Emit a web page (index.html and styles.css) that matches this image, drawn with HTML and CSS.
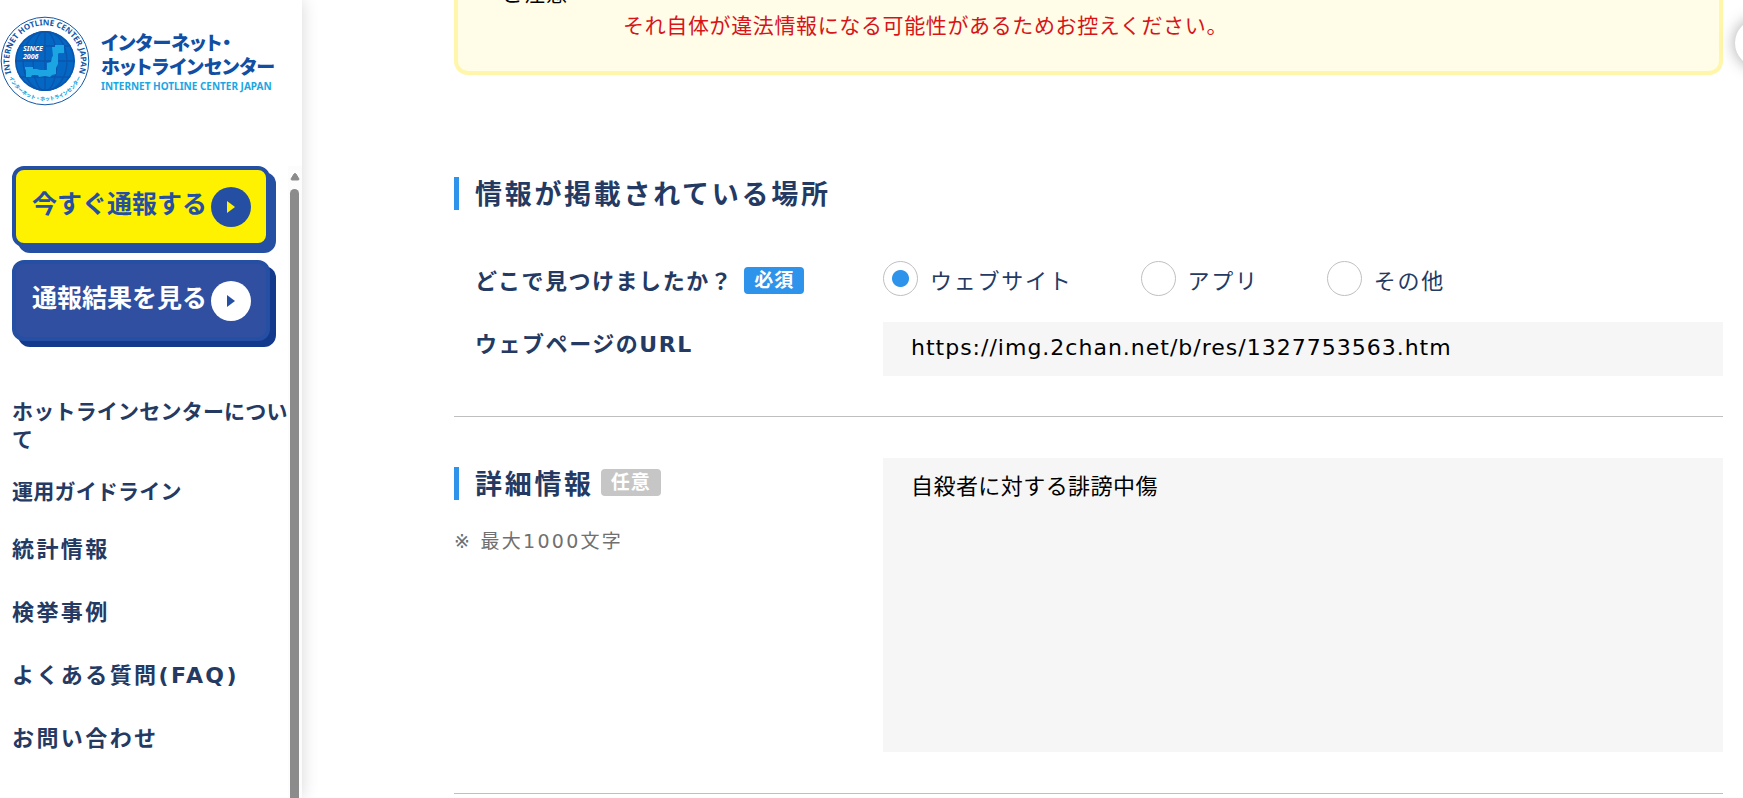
FILE: index.html
```html
<!DOCTYPE html>
<html lang="ja">
<head>
<meta charset="utf-8">
<meta name="viewport" content="width=device-width, initial-scale=1">
<title>インターネット・ホットラインセンター</title>
<link rel="stylesheet" href="styles.css">
</head>
<body>
<div class="page">
  <aside class="sidebar">
    <a class="logo" href="#">
      <svg class="emblem" viewBox="0 0 90 90" aria-hidden="true">
        <defs>
          <path id="arc-top" d="M11.7 58.2A35.8 35.8 0 1 1 78.3 58.2"/>
          <path id="arc-bottom" d="M7.800 58.500A39.500 39.500 0 0 0 82.200 58.500"/>
          <clipPath id="globe"><circle cx="45" cy="45" r="30"/></clipPath>
        </defs>
        <circle cx="45" cy="45" r="43.8" fill="#fff" stroke="#1257a8" stroke-width="1"/>
        <circle cx="45" cy="45" r="30" fill="#0567c4"/>
        <g clip-path="url(#globe)" fill="none" stroke="#0b56ad" stroke-width="1.4">
          <circle cx="45" cy="45" r="29"/>
          <path d="M45 15v60M15 45h60M19 30h52M19 61h52"/>
          <ellipse cx="45" cy="45" rx="12" ry="30"/>
          <ellipse cx="45" cy="45" rx="22" ry="30"/>
        </g>
        <path d="M52 31h3v-2h9v8h-5l-1 1v10l-2 4v6l-4 1-2 2-5-1-6 1-1-2h-6l-1 2h-5v-7l-1-1v-2h8v2h4l3 1h7v-7l4-1 1-5 1-1z" fill="#1ba6e3"/>
        <g class="emblem-since"><text x="23" y="35">SINCE</text><text x="23" y="43">2006</text></g>
        <text class="emblem-en"><textPath href="#arc-top" startOffset="50%">INTERNET HOTLINE CENTER JAPAN</textPath></text>
        <text class="emblem-ja"><textPath href="#arc-bottom" startOffset="50%">インターネット・ホットラインセンター</textPath></text>
      </svg>
      <span class="logo-text">
        <span class="logo-ja">インターネット・<br>ホットラインセンター</span>
        <span class="logo-en">INTERNET HOTLINE CENTER JAPAN</span>
      </span>
    </a>
    <div class="sidebar-body">
      <div class="sidebar-content">
        <a class="cta cta-report" href="#"><span>今すぐ通報する</span>
          <svg class="cta-icon" viewBox="0 0 40 40" aria-hidden="true"><circle class="disc" cx="20" cy="20" r="20"/><path class="arrow" d="M16 14l8 6-8 6z"/></svg></a>
        <a class="cta cta-result" href="#"><span>通報結果を見る</span>
          <svg class="cta-icon" viewBox="0 0 40 40" aria-hidden="true"><circle class="disc" cx="20" cy="20" r="20"/><path class="arrow" d="M16 14l8 6-8 6z"/></svg></a>
        <nav>
          <ul class="nav">
            <li class="compact"><a href="#">ホットラインセンターについて</a></li>
            <li class="compact"><a href="#">運用ガイドライン</a></li>
            <li><a href="#">統計情報</a></li>
            <li><a href="#">検挙事例</a></li>
            <li><a href="#">よくある質問(FAQ)</a></li>
            <li><a href="#">お問い合わせ</a></li>
          </ul>
        </nav>
      </div>
      <div class="scrollbar" aria-hidden="true">
        <svg class="scroll-arrow" viewBox="0 0 10 8"><path d="M4 1q1-1 2 0l3 5q0 1-1 1H2Q1 7 1 6z" stroke="#8b8b8b" fill="#8b8b8b"/></svg>
        <div class="scroll-thumb"></div>
      </div>
    </div>
  </aside>

  <main class="main">
    <section class="notice">
      <h2 class="notice-title">ご注意</h2>
      <p class="notice-text">それ自体が違法情報になる可能性があるためお控えください。</p>
    </section>

    <form>
      <section class="place">
        <h2 class="heading">情報が掲載されている場所</h2>
        <div class="row" role="radiogroup" aria-labelledby="where">
          <div class="label" id="where">どこで見つけましたか？<span class="badge required">必須</span></div>
          <div class="radios">
            <label class="radio"><input type="radio" name="place" checked><span>ウェブサイト</span></label>
            <label class="radio"><input type="radio" name="place"><span>アプリ</span></label>
            <label class="radio"><input type="radio" name="place"><span>その他</span></label>
          </div>
        </div>
        <div class="row url-row">
          <label class="label" for="url">ウェブページのURL</label>
          <input class="field url" id="url" type="text" value="https://img.2chan.net/b/res/1327753563.htm">
        </div>
      </section>
      <section class="row detail">
        <div>
          <h2 class="heading"><label for="detail">詳細情報</label><span class="badge optional">任意</span></h2>
          <p class="hint">※ 最大1000文字</p>
        </div>
        <textarea class="field area" id="detail">自殺者に対する誹謗中傷</textarea>
      </section>
    </form>
  </main>
  <button class="float-button" type="button" aria-label="メニュー"></button>
</div>
</body>
</html>
```

FILE: styles.css
```css
* { box-sizing: border-box; }

body {
  margin: 0;
  background: #fff;
  color: #243a63;
  font-family: "DejaVu Sans", "Noto Sans CJK JP", sans-serif;
  font-size: 22px;
}

h2, p, ul { margin: 0; padding: 0; }
a { color: inherit; text-decoration: none; }

.page {
  position: relative;
  display: flex;
  height: 100vh;
  overflow: hidden;
}

/* Sidebar */
.sidebar {
  display: flex;
  flex: none;
  flex-direction: column;
  width: 302px;
  box-shadow: 0 0 16px rgba(0, 0, 0, 0.16);
}

.logo {
  display: flex;
  gap: 11px;
  height: 166px;
  padding-top: 16px;
}

.emblem { flex: none; width: 90px; height: 90px; }
.emblem text { font-family: "Noto Sans", "Noto Sans CJK JP", sans-serif; font-weight: 700; }
.emblem-since text { fill: #fff; font-size: 7px; font-style: italic; }
.emblem .emblem-en { fill: #1257a8; font-size: 8px; text-anchor: middle; }
.emblem .emblem-ja { fill: #1ba6e3; font-size: 5px; font-weight: 900; text-anchor: middle; }

.logo-text { padding-top: 14px; white-space: nowrap; }

.logo-ja {
  display: block;
  color: #104fa3;
  font-family: "Noto Sans CJK JP", sans-serif;
  font-feature-settings: "palt";
  font-size: 19px;
  font-weight: 900;
  line-height: 24px;
}

.logo-en {
  display: block;
  color: #1ba6e3;
  font-family: "Noto Sans", sans-serif;
  font-size: 10px;
  font-weight: 700;
  line-height: 16px;
}

.sidebar-body { display: flex; flex: 1; min-height: 0; }
.sidebar-content { flex: 1; min-width: 0; padding-left: 12px; }

.cta {
  display: flex;
  align-items: center;
  gap: 4px;
  height: 81px;
  margin: 0 18px 13px 0;
  padding-left: 16px;
  border: 4px solid #254fa3;
  border-radius: 12px;
  font-size: 25px;
  font-weight: 700;
  line-height: 36px;
  white-space: nowrap;
}

.cta span { padding-bottom: 4px; }
.cta-icon { flex: none; width: 40px; height: 40px; }
.cta-report { background: #fff200; box-shadow: 6px 6px 0 #254fa3; color: #254fa3; }
.cta-report .disc { fill: #254fa3; }
.cta-report .arrow { fill: #fff200; }
.cta-result { background: #304fa0; box-shadow: 6px 6px 0 #12398c; color: #fff; }
.cta-result .disc { fill: #fff; }
.cta-result .arrow { fill: #254fa3; }

.nav {
  display: grid;
  gap: 24px;
  padding-top: 44px;
  list-style: none;
  font-weight: 700;
  letter-spacing: 0.11em;
  line-height: 39px;
}

.nav .compact { font-size: 21px; letter-spacing: 0.01em; line-height: 28px; }

.scrollbar {
  display: flex;
  flex: none;
  flex-direction: column;
  align-items: center;
  width: 14px;
  padding: 7px 1px 0 0;
  background: #fcfcfc;
}

.scroll-arrow { width: 10px; height: 8px; }
.scroll-thumb { flex: 1; width: 9px; margin-top: 8px; border-radius: 5px 5px 0 0; background: #8b8b8b; }

/* Main column */
.main { flex: 1; min-width: 0; padding: 0 20px 0 152px; }

.notice {
  display: grid;
  grid-template-columns: 121px 1fr;
  margin-top: -40px;
  padding: 14px 44px 29px;
  border: 4px solid #fff6ab;
  border-radius: 14px;
  background: #fffde7;
  line-height: 32px;
}

.notice-title { color: #000; font-size: 21px; font-weight: 400; letter-spacing: 0.05em; }
.notice-text { grid-row: 2; grid-column: 2; color: #d7141a; font-size: 21px; letter-spacing: 0.03em; }

.heading {
  display: flex;
  align-items: center;
  height: 33px;
  padding: 0 0 3px 16px;
  border-left: 5px solid #2e93ea;
  font-size: 27px;
  letter-spacing: 0.1em;
}

.row { display: grid; grid-template-columns: 429px 1fr; }

.place { padding: 102px 0 40px; border-bottom: 1px solid #bfbfbf; }
.place .heading { margin-bottom: 51px; }

.label {
  display: flex;
  align-items: center;
  padding: 2px 0 0 21px;
  font-weight: 700;
  letter-spacing: 0.07em;
  line-height: 36px;
}

.badge {
  display: inline-block;
  padding: 0 10px;
  border-radius: 4px;
  color: #fff;
  font-size: 19px;
  font-weight: 700;
  letter-spacing: 0.05em;
  line-height: 27px;
}

.required { margin: 0 0 3px 11px; background: #2e93ea; }
.optional { margin-left: 7px; background: #c6c6c6; }

.radios { display: flex; gap: 68px; letter-spacing: 0.08em; }
.radio { display: flex; align-items: start; gap: 12px; line-height: 36px; }
.radio span { padding-top: 3px; }

.radio input {
  width: 35px;
  height: 35px;
  margin: 0;
  border: 1px solid #bfbfbf;
  border-radius: 50%;
  appearance: none;
}

.radio input:checked { background: radial-gradient(circle, #2e93ea 8px, transparent 9px); }

.url-row { padding-top: 22px; }
.url-row .label { align-self: start; padding-top: 5px; }

.field {
  width: 100%;
  height: 54px;
  margin: 0;
  padding: 0 28px;
  border: 0;
  border-radius: 0;
  outline: 0;
  background: #f6f6f6;
  color: #000;
  font: inherit;
}

.url { padding-bottom: 4px; letter-spacing: 1px; }

.detail { padding: 41px 0; border-bottom: 1px solid #bfbfbf; }
.detail .heading { margin-top: 9px; }
.area { display: block; height: 294px; padding-top: 12px; letter-spacing: 0.02em; line-height: 34px; resize: none; }

.hint { padding-top: 27px; color: #707070; font-size: 19px; letter-spacing: 0.12em; line-height: 28px; }

/* Floating control at the window's right edge */
.float-button {
  position: absolute;
  top: 19px;
  right: -40px;
  width: 48px;
  height: 48px;
  padding: 0;
  border: 0;
  border-radius: 50%;
  background: #fff;
  box-shadow: 0 0 16px rgba(0, 0, 0, 0.35);
}
```
